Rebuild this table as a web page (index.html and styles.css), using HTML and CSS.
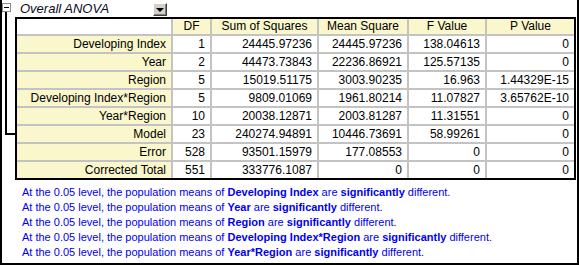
FILE: index.html
```html
<!DOCTYPE html>
<html>
<head>
<meta charset="utf-8">
<link rel="stylesheet" href="styles.css">
</head>
<body>
<div class="frame">
  <div class="gutter">
    <div class="minus"></div>
    <div class="elbow"></div>
  </div>
  <div class="main">
    <div class="titlebar">
      <span class="title">Overall ANOVA</span>
      <span class="dd"><span class="tri"></span></span>
    </div>
    <div class="anova">
      <div class="cell corner"></div>
      <div class="cell hdr">DF</div>
      <div class="cell hdr">Sum of Squares</div>
      <div class="cell hdr">Mean Square</div>
      <div class="cell hdr">F Value</div>
      <div class="cell hdr">P Value</div>

      <div class="cell lbl">Developing Index</div>
      <div class="cell">1</div>
      <div class="cell">24445.97236</div>
      <div class="cell">24445.97236</div>
      <div class="cell">138.04613</div>
      <div class="cell">0</div>

      <div class="cell lbl">Year</div>
      <div class="cell">2</div>
      <div class="cell">44473.73843</div>
      <div class="cell">22236.86921</div>
      <div class="cell">125.57135</div>
      <div class="cell">0</div>

      <div class="cell lbl">Region</div>
      <div class="cell">5</div>
      <div class="cell">15019.51175</div>
      <div class="cell">3003.90235</div>
      <div class="cell">16.963</div>
      <div class="cell">1.44329E-15</div>

      <div class="cell lbl">Developing Index*Region</div>
      <div class="cell">5</div>
      <div class="cell">9809.01069</div>
      <div class="cell">1961.80214</div>
      <div class="cell">11.07827</div>
      <div class="cell">3.65762E-10</div>

      <div class="cell lbl">Year*Region</div>
      <div class="cell">10</div>
      <div class="cell">20038.12871</div>
      <div class="cell">2003.81287</div>
      <div class="cell">11.31551</div>
      <div class="cell">0</div>

      <div class="cell lbl">Model</div>
      <div class="cell">23</div>
      <div class="cell">240274.94891</div>
      <div class="cell">10446.73691</div>
      <div class="cell">58.99261</div>
      <div class="cell">0</div>

      <div class="cell lbl">Error</div>
      <div class="cell">528</div>
      <div class="cell">93501.15979</div>
      <div class="cell">177.08553</div>
      <div class="cell">0</div>
      <div class="cell">0</div>

      <div class="cell lbl last">Corrected Total</div>
      <div class="cell last">551</div>
      <div class="cell last">333776.1087</div>
      <div class="cell last">0</div>
      <div class="cell last">0</div>
      <div class="cell last">0</div>
    </div>
    <div class="notes">
      <p>At the 0.05 level, the population means of <b>Developing Index</b> are <b>significantly</b> different.</p>
      <p>At the 0.05 level, the population means of <b>Year</b> are <b>significantly</b> different.</p>
      <p>At the 0.05 level, the population means of <b>Region</b> are <b>significantly</b> different.</p>
      <p>At the 0.05 level, the population means of <b>Developing Index*Region</b> are <b>significantly</b> different.</p>
      <p>At the 0.05 level, the population means of <b>Year*Region</b> are <b>significantly</b> different.</p>
    </div>
  </div>
</div>
</body>
</html>
```

FILE: styles.css
```css
html, body {
  margin: 0;
  padding: 0;
  background: #fff;
}

body {
  font-family: "Liberation Sans", Arial, sans-serif;
  color: #000;
}

.frame {
  width: 579px;
  height: 265px;
  box-sizing: border-box;
  border: 2px solid #000;
  border-top: 0;
  display: flex;
}

.gutter {
  width: 13px;
  flex: none;
  display: flex;
  flex-direction: column;
}

.minus {
  width: 9px;
  height: 9px;
  box-sizing: border-box;
  margin-top: 3px;
  border: 1px solid #8c8c8c;
  background: #fff;
  display: flex;
  align-items: center;
  justify-content: center;
}

.minus::before {
  content: "";
  width: 5px;
  height: 1px;
  background: #000;
}

.elbow {
  margin-left: 3px;
  width: 10px;
  height: 123px;
  box-sizing: border-box;
  border-left: 2px solid #000;
  border-bottom: 2px solid #000;
}

.main {
  flex: 1;
  display: flex;
  flex-direction: column;
}

.titlebar {
  height: 17px;
  display: flex;
  align-items: flex-start;
}

.title {
  width: 133px;
  padding-left: 5px;
  font-size: 13px;
  line-height: 17px;
  font-style: italic;
  color: #0a0a1e;
  white-space: nowrap;
}

.dd {
  margin-top: 3px;
  width: 14px;
  height: 13px;
  box-sizing: border-box;
  background: #d4d0c8;
  border: 1px solid;
  border-color: #fff #404040 #404040 #fff;
  box-shadow: inset -1px -1px 0 #808080;
  display: flex;
  align-items: center;
  justify-content: center;
}

.tri {
  width: 0;
  height: 0;
  border-left: 4px solid transparent;
  border-right: 4px solid transparent;
  border-top: 4px solid #000;
  margin: 1px 1px 0 0;
}

.anova {
  width: 561px;
  box-sizing: border-box;
  border: 2px solid #000;
  display: grid;
  grid-template-columns: 156px 39px 107px 90px 78px 87px;
  font-size: 12px;
}

.cell {
  box-sizing: border-box;
  height: 18px;
  line-height: 16px;
  padding-right: 5px;
  text-align: right;
  white-space: nowrap;
  border-right: 2px solid #c3c3c3;
  border-bottom: 2px solid #c3c3c3;
  background: #fff;
}

.cell:nth-child(6n) {
  border-right: 0;
}

.hdr {
  height: 17px;
  line-height: 15px;
  text-align: center;
  padding: 0;
  background: #f9f7cb;
}

.corner {
  height: 17px;
}

.lbl {
  background: #f9f7cb;
}

.last {
  height: 16px;
  border-bottom: 0;
}

.notes {
  margin-top: 5px;
  padding-left: 7px;
  font-size: 11px;
  line-height: 15px;
  color: #0000f0;
}

.notes p {
  margin: 0;
  white-space: nowrap;
}
```
